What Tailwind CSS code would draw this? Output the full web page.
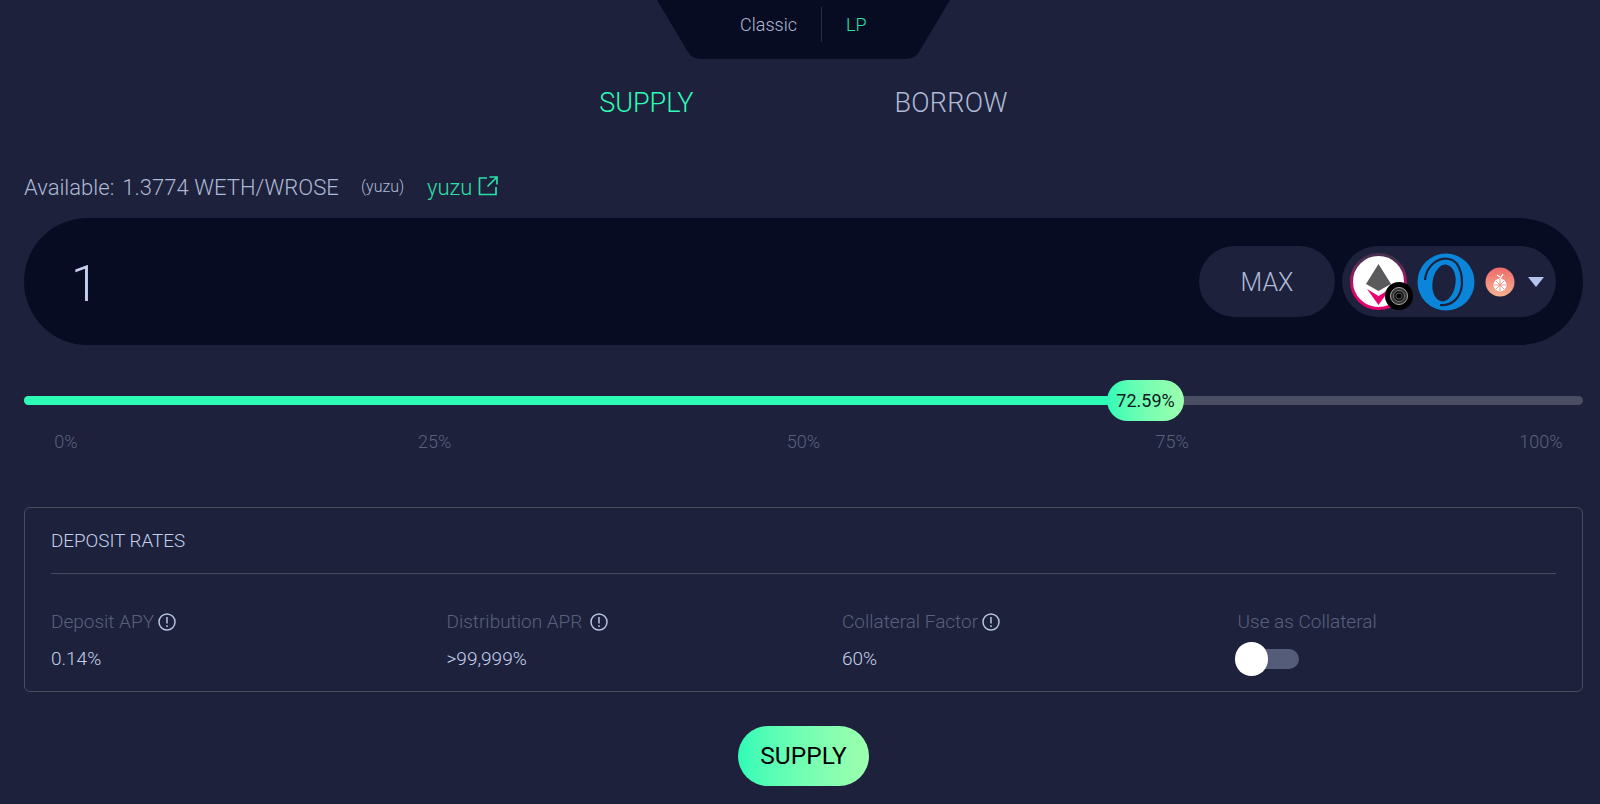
<!DOCTYPE html>
<html lang="en">
<head>
    <meta charset="UTF-8">
    <title>Supply</title>
    <script src="https://cdn.jsdelivr.net/npm/@tailwindcss/browser@4"></script>
</head>
<body class="bg-[#1d213c] h-[804px] overflow-hidden pl-6 pr-[17px] font-['Roboto',sans-serif] font-light text-[#aeb9d6]">
    <!-- Classic / LP tab -->
    <div class="relative w-[293px] h-[59px] mx-auto">
        <svg class="absolute inset-0" width="293" height="59" viewBox="0 0 293 59"><path d="M0 0H293L262 52Q258 59 249 59H44Q35 59 31 52Z" fill="#080c22"/></svg>
        <div class="relative flex h-[48px] items-center pl-[83px] text-[18px]">
            <span class="w-[81px]">Classic</span>
            <span class="w-px h-[35px] bg-[#2a2d45]"></span>
            <span class="ml-[24px] text-[#2be0a6]">LP</span>
        </div>
    </div>

    <div class="flex justify-center gap-[201px] mt-[28px] text-[27px] leading-[32px]">
        <span class="text-[#2dfcb7]">SUPPLY</span>
        <span class="tracking-[0.3px]">BORROW</span>
    </div>

    <div class="flex items-center h-[30px] mt-[53px]">
        <span class="text-[22px] w-[337px]">Available:<span class="ml-[8px] tracking-[0.05px]">1.3774 WETH/WROSE</span></span>
        <span class="text-[16px] w-[66px]">(yuzu)</span>
        <span class="text-[22px] text-[#2be0a6]">yuzu</span>
        <svg class="ml-[6px] mb-[3px]" width="20" height="20" viewBox="0 0 20 20" fill="none" stroke="#2be0a6" stroke-width="1.7"><path d="M9 2H1.5V18.5H18V11M11.5 1H19V8.5M19 1L9.5 10.5"/></svg>
    </div>

    <!-- amount input -->
    <div class="flex items-center h-[127px] mt-[16px] rounded-[64px] bg-[#080c22] pl-[47px] pr-[27px]">
        <span class="text-[50px] text-[#c3cfec] font-light flex-1 pt-[5px]">1</span>
        <button class="w-[136px] h-[71px] rounded-full bg-[#1d213c] text-[25px] pt-[2px]">MAX</button>
        <div class="flex items-center w-[214px] h-[71px] ml-[7px] pl-[8px] rounded-full bg-[#1d213c]">
            <svg class="overflow-visible" width="58" height="58" viewBox="0 0 58 58">
                <defs><linearGradient id="ring" x1="0" y1="0" x2="0" y2="1"><stop offset="0.1" stop-color="#4a3050"/><stop offset="0.75" stop-color="#e6026f"/></linearGradient></defs>
                <circle cx="28.5" cy="28.5" r="27" fill="#fff" stroke="url(#ring)" stroke-width="3"/>
                <path d="M28.5 11L41 31L28.5 38L16 31Z" fill="#5a5a5c"/>
                <path d="M17 36L28.5 43L40 36L28.5 52Z" fill="#e6026f"/>
                <circle cx="49" cy="43" r="14" fill="#000"/>
                <circle cx="49" cy="43" r="8.5" fill="#333"/>
                <circle cx="49" cy="43" r="8.5" fill="none" stroke="#aaa" stroke-width="1"/>
                <circle cx="49" cy="43" r="5.5" fill="#111" stroke="#777" stroke-width="1"/>
                <circle cx="49" cy="43" r="3" fill="#000" stroke="#555" stroke-width="1"/>
            </svg>
            <svg class="ml-[9px]" width="58" height="58" viewBox="0 0 58 58">
                <circle cx="29" cy="29" r="28.5" fill="#0b85da"/>
                <ellipse cx="27" cy="30" rx="11.5" ry="18.5" transform="rotate(8 27 30)" fill="#1d213c"/>
                <path d="M8 27C9 13 21 4 32 6C38 7 42 12 44 20C45 24 45 27 45 31" fill="none" stroke="#1d213c" stroke-width="2.2"/>
                <path d="M45 31C44 45 35 53 23 52" fill="none" stroke="#1d213c" stroke-width="2.2"/>
            </svg>
            <svg class="ml-[10px]" width="30" height="30" viewBox="0 0 30 30">
                <defs><linearGradient id="peach" x1="0" y1="0" x2="0" y2="1"><stop offset="0" stop-color="#ee6b6b"/><stop offset="1" stop-color="#f6b190"/></linearGradient></defs>
                <circle cx="15" cy="15" r="14.5" fill="url(#peach)"/>
                <circle cx="15" cy="18" r="6.5" fill="#fff"/>
                <path d="M15 12L18 7M15 10L12 8" stroke="#fff" stroke-width="1.3"/>
                <path d="M15 12V24M9 18H21M11 14L19 22M19 14L11 22" stroke="#ee8a80" stroke-width="0.9"/>
            </svg>
            <svg class="ml-[13px]" width="16" height="10" viewBox="0 0 16 10"><path d="M0 0H16L8 10Z" fill="#b5c4ee"/></svg>
        </div>
    </div>

    <!-- slider -->
    <div class="relative h-[41px] mt-[35px] flex items-center">
        <div class="w-full h-[9px] rounded-full bg-[#4b4e62]">
            <div class="h-full w-[72.59%] rounded-full bg-[#2dfcb7]"></div>
        </div>
        <div class="absolute left-[1083px] top-0 w-[77px] h-[41px] rounded-full bg-gradient-to-r from-[#2dfcb7] to-[#9cffae] flex items-center justify-center text-[18px] font-normal text-[#0b1a20]">72.59%</div>
    </div>
    <div class="flex justify-between h-[24px] mt-[7px] px-3 text-[18px] text-[#5a607c]">
        <span class="w-[60px] text-center">0%</span>
        <span class="w-[60px] text-center">25%</span>
        <span class="w-[60px] text-center">50%</span>
        <span class="w-[60px] text-center">75%</span>
        <span class="w-[60px] text-center">100%</span>
    </div>

    <!-- deposit rates -->
    <div class="h-[185px] mt-[55px] rounded-[6px] border border-[#4a4c5e] px-[26px]">
        <div class="h-[66px] border-b border-[#4a4c5e] pt-[21px] text-[18.8px] leading-[24px] text-[#c3cfec]">DEPOSIT RATES</div>
        <div class="grid grid-cols-4 gap-x-[77px] mt-[34px]">
            <div>
                <div class="flex items-center gap-[4px] h-[28px] text-[19px] text-[#5a607c]">Deposit APY
                    <svg width="18" height="18" viewBox="0 0 18 18" fill="none" stroke="#b5c4e0" stroke-width="1.5"><circle cx="9" cy="9" r="8"/><path d="M9 4V10.5M9 12.3V14"/></svg>
                </div>
                <div class="mt-[9px] text-[19px] leading-[28px] text-[#c3cfec]">0.14%</div>
            </div>
            <div>
                <div class="flex items-center gap-[8px] h-[28px] text-[19px] text-[#5a607c]">Distribution APR
                    <svg width="18" height="18" viewBox="0 0 18 18" fill="none" stroke="#b5c4e0" stroke-width="1.5"><circle cx="9" cy="9" r="8"/><path d="M9 4V10.5M9 12.3V14"/></svg>
                </div>
                <div class="mt-[9px] text-[19px] leading-[28px] text-[#c3cfec]">&gt;99,999%</div>
            </div>
            <div>
                <div class="flex items-center gap-[4px] h-[28px] text-[19px] text-[#5a607c]">Collateral Factor
                    <svg width="18" height="18" viewBox="0 0 18 18" fill="none" stroke="#b5c4e0" stroke-width="1.5"><circle cx="9" cy="9" r="8"/><path d="M9 4V10.5M9 12.3V14"/></svg>
                </div>
                <div class="mt-[9px] text-[19px] leading-[28px] text-[#c3cfec]">60%</div>
            </div>
            <div>
                <div class="h-[28px] leading-[28px] text-[19px] text-[#5a607c]">Use as Collateral</div>
                <div class="relative w-[63px] h-[20px] mt-[13px] ml-[-2px] rounded-full bg-[#555c7a]">
                    <div class="absolute left-[-1px] top-[-7px] w-[33px] h-[34px] rounded-full bg-white"></div>
                </div>
            </div>
        </div>
    </div>

    <div class="flex justify-center mt-[34px]">
        <button class="w-[131px] h-[60px] rounded-full bg-gradient-to-r from-[#2dfcb7] to-[#9cffae] text-[24.5px] font-normal text-black">SUPPLY</button>
    </div>
</body>
</html>
